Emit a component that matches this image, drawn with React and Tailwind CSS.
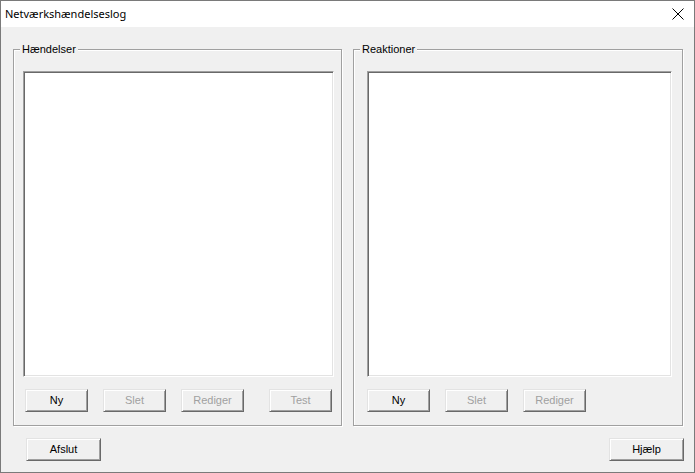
import React from "react";

const font = { fontFamily: '"Liberation Sans", Arial, sans-serif' };

function Btn({ children, disabled, className = "" }) {
  return (
    <div
      className={`h-[23px] flex items-center justify-center bg-[#f0f0f0] border border-t-[#e3e3e3] border-l-[#e3e3e3] border-r-[#696969] border-b-[#696969] shadow-[inset_1px_1px_0_#ffffff,inset_-1px_-1px_0_#a0a0a0] text-[11px] ${disabled ? "text-[#a0a0a0]" : "text-black"} ${className}`}
    >
      {children}
    </div>
  );
}

function ListBox({ className = "" }) {
  return (
    <div
      className={`bg-white border border-t-[#a0a0a0] border-l-[#a0a0a0] border-r-white border-b-white shadow-[inset_1px_1px_0_#696969,inset_-1px_-1px_0_#e3e3e3] ${className}`}
    />
  );
}

function Group({ label, className = "", children }) {
  return (
    <div
      className={`relative border border-[#a0a0a0] shadow-[inset_1px_1px_0_#ffffff,1px_1px_0_#ffffff] ${className}`}
    >
      <div className="absolute -top-[8px] left-[6px] bg-[#f0f0f0] px-[2px] text-[11px] leading-[14px] text-black">
        {label}
      </div>
      {children}
    </div>
  );
}

export default function App() {
  return (
    <div
      className="w-[695px] h-[473px] border border-[#7a7a7a] bg-[#f0f0f0] flex flex-col overflow-hidden"
      style={font}
    >
      <div className="h-[26px] bg-white flex items-center justify-between shrink-0">
        <span
          className="pl-[4px] text-[11px] text-black"
          style={{ fontFamily: '"Noto Sans", "Open Sans", sans-serif' }}
        >
          Netværkshændelseslog
        </span>
        <svg width="12" height="12" viewBox="0 0 12 12" className="mr-[10px]">
          <path d="M0.5 0.5 L11.5 11.5 M11.5 0.5 L0.5 11.5" stroke="#000" strokeWidth="1" fill="none" />
        </svg>
      </div>
      <div className="flex mt-[22px] ml-[12px]">
        <Group label="Hændelser" className="w-[329px] h-[377px]">
          <div className="flex flex-col ml-[9px] mt-[21px]">
            <ListBox className="w-[311px] h-[306px]" />
            <div className="flex mt-[12px] ml-[2px]">
              <Btn className="w-[63px]">Ny</Btn>
              <Btn disabled className="w-[63px] ml-[15px]">Slet</Btn>
              <Btn disabled className="w-[63px] ml-[15px]">Rediger</Btn>
              <Btn disabled className="w-[63px] ml-[25px]">Test</Btn>
            </div>
          </div>
        </Group>
        <Group label="Reaktioner" className="w-[330px] h-[377px] ml-[11px]">
          <div className="flex flex-col ml-[13px] mt-[21px]">
            <ListBox className="w-[305px] h-[306px]" />
            <div className="flex mt-[12px]">
              <Btn className="w-[63px]">Ny</Btn>
              <Btn disabled className="w-[63px] ml-[15px]">Slet</Btn>
              <Btn disabled className="w-[63px] ml-[15px]">Rediger</Btn>
            </div>
          </div>
        </Group>
      </div>
      <div className="flex justify-between mt-[12px] ml-[25px] mr-[10px]">
        <Btn className="w-[75px]">Afslut</Btn>
        <Btn className="w-[75px]">Hjælp</Btn>
      </div>
    </div>
  );
}
